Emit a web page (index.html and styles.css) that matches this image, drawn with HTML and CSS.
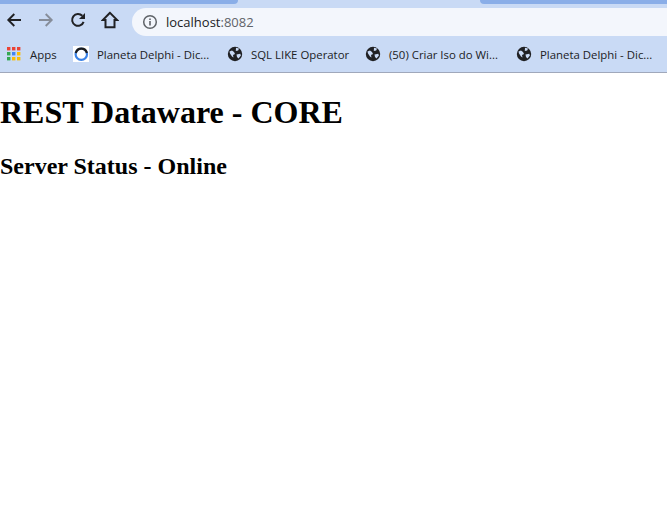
FILE: index.html
```html
<!DOCTYPE html>
<html lang="en">
<head>
<meta charset="utf-8">
<title>localhost:8082</title>
<link rel="stylesheet" href="styles.css">
</head>
<body>
<header class="chrome">
  <div class="tabstrip">
    <div class="tab tab-left"></div>
    <div class="tab-gap"></div>
    <div class="tab tab-right"></div>
  </div>
  <div class="toolbar">
    <svg class="nav nav-back" width="16" height="16" viewBox="0 0 16 16"><path d="M15 8H2.500M8.300 2 2.300 8l6 6" fill="none" stroke="#202124" stroke-width="1.9"/></svg>
    <svg class="nav nav-fwd" width="16" height="16" viewBox="0 0 16 16"><path d="M1 8h12.500M7.700 2l6 6-6 6" fill="none" stroke="#868d9a" stroke-width="1.9"/></svg>
    <svg class="nav nav-reload" width="16" height="16" viewBox="0 0 16 16"><path d="M13.600 9.800A5.900 5.900 0 1 1 12.300 3.800" fill="none" stroke="#202124" stroke-width="2"/><path d="M15 1v6H9z" fill="#202124"/></svg>
    <svg class="nav nav-home" width="18" height="18" viewBox="0 0 18 18"><path d="M9 1.800 1.800 9h2.700v7.200h9V9h2.700z" fill="none" stroke="#202124" stroke-width="2"/></svg>
    <div class="address">
      <svg class="info" width="16" height="16" viewBox="0 0 16 16"><circle cx="8" cy="8" r="6.300" fill="none" stroke="#5f6368" stroke-width="1.500"/><path d="M7.200 7h1.600v4.500H7.200zM7.200 4.400h1.600V6H7.200z" fill="#5f6368"/></svg>
      <span class="host">localhost</span><span class="port">:8082</span>
    </div>
  </div>
  <nav class="bookmarks">
    <a class="bm bm-apps">
      <svg class="apps" width="14" height="14" viewBox="0 0 14 14">
        <rect x="0" y="0" width="3.400" height="3.400" fill="#ea4335"/><rect x="5" y="0" width="3.400" height="3.400" fill="#ea4335"/><rect x="10" y="0" width="3.400" height="3.400" fill="#ea4335"/>
        <rect x="0" y="5" width="3.400" height="3.400" fill="#34a853"/><rect x="5" y="5" width="3.400" height="3.400" fill="#4285f4"/><rect x="10" y="5" width="3.400" height="3.400" fill="#fbbc05"/>
        <rect x="0" y="10" width="3.400" height="3.400" fill="#34a853"/><rect x="5" y="10" width="3.400" height="3.400" fill="#fbbc05"/><rect x="10" y="10" width="3.400" height="3.400" fill="#fbbc05"/>
      </svg>
      <span>Apps</span>
    </a>
    <a class="bm bm-delphi">
      <svg class="fav" width="16" height="16" viewBox="0 0 16 16"><rect width="16" height="16" fill="#fff"/><circle cx="8.300" cy="8.200" r="5.700" fill="none" stroke="#3b82e6" stroke-width="2.200"/><path d="M2.800 7A5.700 5.700 0 0 1 13.900 7" fill="none" stroke="#1c1c1c" stroke-width="2.200"/></svg>
      <span>Planeta Delphi - Dic...</span>
    </a>
    <a class="bm bm-sql">
      <svg class="fav" width="16" height="16" viewBox="0 0 16 16"><use href="#globe"/></svg>
      <span>SQL LIKE Operator</span>
    </a>
    <a class="bm bm-iso">
      <svg class="fav" width="16" height="16" viewBox="0 0 16 16"><use href="#globe"/></svg>
      <span>(50) Criar Iso do Wi...</span>
    </a>
    <a class="bm bm-planeta">
      <svg class="fav" width="16" height="16" viewBox="0 0 16 16"><use href="#globe"/></svg>
      <span>Planeta Delphi - Dic...</span>
    </a>
  </nav>
  <svg class="defs" width="0" height="0"><defs><g id="globe"><circle cx="8" cy="8" r="7.200" fill="#202124"/><path d="M2.500 5.500 5 4.500l2 1.500 1 2-2 1 .5 2.500-1.500-1-2-3zM9 1.800l3 .8-.8 2-2.400.4zM9.500 8.500l3.800-.8.600 1.800-2.400 3-1.500-1.500z" fill="#c9daf5"/></g></defs></svg>
</header>
<main class="page">
  <h1>REST Dataware - CORE</h1>
  <h2>Server Status - Online</h2>
</main>
</body>
</html>
```
FILE: styles.css
```css
html, body { margin: 0; padding: 0; background: #fff; }
body { width: 667px; height: 520px; overflow: hidden; font-family: "Liberation Serif", serif; color: #000; }
.chrome { height: 73px; box-sizing: border-box; background: #c9daf5; border-bottom: 1px solid #a0a8bb; position: relative; overflow: hidden; }
.tabstrip { display: flex; height: 4px; }
.tab { background: #8aaee8; height: 4px; }
.tab-left { width: 238px; border-bottom-right-radius: 6px; }
.tab-gap { width: 242px; }
.tab-right { flex: 1; border-bottom-left-radius: 6px; }
.toolbar { display: flex; align-items: center; height: 32px; padding-left: 6px; }
.nav { flex: none; display: block; }
.nav-fwd { margin-left: 16px; }
.nav-reload { margin-left: 16px; }
.nav-home { margin-left: 15px; }
.address { flex: 1; margin-left: 13px; height: 28px; align-self: flex-end; background: #f3f6fc; border-radius: 14px 0 0 14px; display: flex; align-items: center; padding-left: 10px; font: 13px "Open Sans", sans-serif; margin-right: -30px; }
.info { margin-right: 8px; flex: none; }
.host { color: #202124; }
.port { color: #5f6368; }
.bookmarks { display: flex; align-items: center; height: 36px; font: 11.400px "Open Sans", sans-serif; color: #202124; white-space: nowrap; }
.bm { display: flex; align-items: center; flex: none; }
.bm span { display: block; }
.bm-apps { margin-left: 7px; width: 66px; }
.apps { margin-right: 9px; }
.fav { flex: none; margin-right: 8px; }
.bm-delphi { width: 154px; }
.bm-sql { width: 138px; }
.bm-iso { width: 151px; }
.defs { position: absolute; }
.page { padding: 0; }
h1 { margin: 21px 0 0; font-size: 32px; line-height: 37px; font-weight: bold; }
h2 { margin: 22px 0 0; font-size: 24px; line-height: 27px; font-weight: bold; }
```
